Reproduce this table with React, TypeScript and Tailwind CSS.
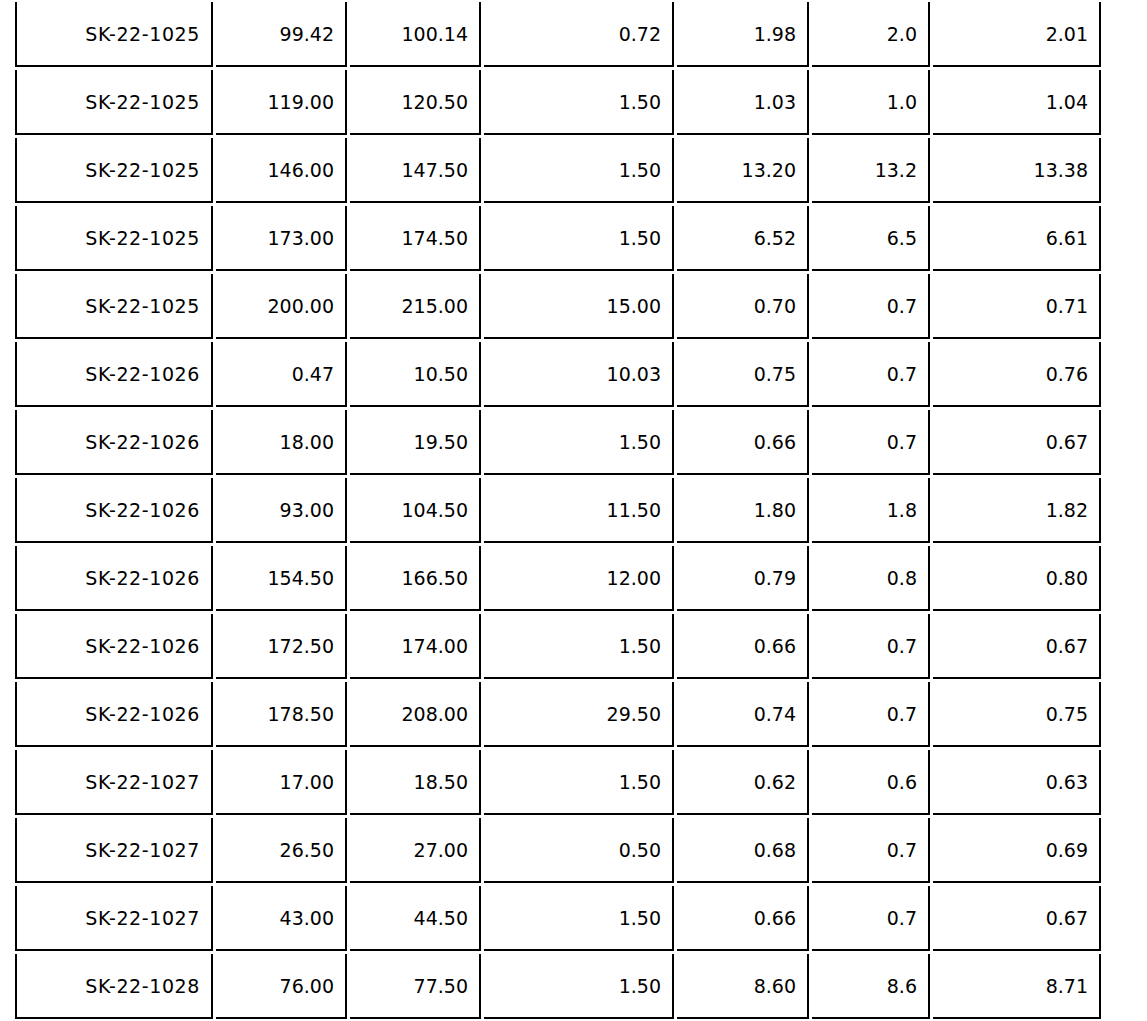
const rows: string[][] = [
  ["SK-22-1025", "99.42", "100.14", "0.72", "1.98", "2.0", "2.01"],
  ["SK-22-1025", "119.00", "120.50", "1.50", "1.03", "1.0", "1.04"],
  ["SK-22-1025", "146.00", "147.50", "1.50", "13.20", "13.2", "13.38"],
  ["SK-22-1025", "173.00", "174.50", "1.50", "6.52", "6.5", "6.61"],
  ["SK-22-1025", "200.00", "215.00", "15.00", "0.70", "0.7", "0.71"],
  ["SK-22-1026", "0.47", "10.50", "10.03", "0.75", "0.7", "0.76"],
  ["SK-22-1026", "18.00", "19.50", "1.50", "0.66", "0.7", "0.67"],
  ["SK-22-1026", "93.00", "104.50", "11.50", "1.80", "1.8", "1.82"],
  ["SK-22-1026", "154.50", "166.50", "12.00", "0.79", "0.8", "0.80"],
  ["SK-22-1026", "172.50", "174.00", "1.50", "0.66", "0.7", "0.67"],
  ["SK-22-1026", "178.50", "208.00", "29.50", "0.74", "0.7", "0.75"],
  ["SK-22-1027", "17.00", "18.50", "1.50", "0.62", "0.6", "0.63"],
  ["SK-22-1027", "26.50", "27.00", "0.50", "0.68", "0.7", "0.69"],
  ["SK-22-1027", "43.00", "44.50", "1.50", "0.66", "0.7", "0.67"],
  ["SK-22-1028", "76.00", "77.50", "1.50", "8.60", "8.6", "8.71"],
];

// column widths measured from the screenshot (border-box)
const colWidths = ["w-[198px]", "w-[131px]", "w-[131px]", "w-[190px]", "w-[132px]", "w-[118px]", "w-[168px]"];

export default function App() {
  return (
    <div className="min-h-screen bg-white overflow-hidden">
      <table
        className="table-fixed border-separate border-spacing-[3px] ml-[12px] -mt-px w-[1092px] text-black text-[19px]"
        style={{ fontFamily: '"DejaVu Sans", Verdana, sans-serif' }}
      >
        <colgroup>
          {colWidths.map((w, i) => (
            <col key={i} className={w} />
          ))}
        </colgroup>
        <tbody>
          {rows.map((row, r) => (
            <tr key={r}>
              {row.map((cell, c) => (
                <td
                  key={c}
                  className={`h-[65px] text-right align-middle pr-[11px] pt-[1px] border-r-2 border-b-2 border-black ${
                    c === 0 ? "border-l-2 tracking-[0.6px]" : ""
                  }`}
                >
                  {cell}
                </td>
              ))}
            </tr>
          ))}
        </tbody>
      </table>
    </div>
  );
}
